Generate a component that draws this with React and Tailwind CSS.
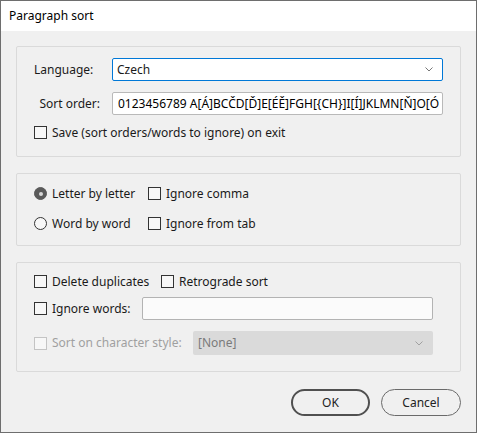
import React, { useState } from "react";

const font = { fontFamily: '"Noto Sans", "Open Sans", sans-serif' };

const Check = ({ checked, disabled, onChange }) => (
  <span
    onClick={disabled ? undefined : onChange}
    className={`inline-flex items-center justify-center w-[13px] h-[13px] shrink-0 border bg-[#f7f7f7] ${
      disabled ? "border-[#c4c4c4]" : "border-[#333333]"
    }`}
  >
    {checked && (
      <svg width="9" height="9" viewBox="0 0 9 9">
        <path d="M1 4.5 L3.5 7 L8 1.5" fill="none" stroke="#333" strokeWidth="1.4" />
      </svg>
    )}
  </span>
);

const Radio = ({ checked, onChange }) => (
  <span
    onClick={onChange}
    className={`inline-flex items-center justify-center w-[13px] h-[13px] shrink-0 rounded-full border ${
      checked ? "bg-[#5a5a5a] border-[#5a5a5a]" : "bg-[#f7f7f7] border-[#333333]"
    }`}
  >
    {checked && <span className="w-[4px] h-[4px] rounded-full bg-[#d8d8d8]" />}
  </span>
);

const Chevron = ({ color = "#777" }) => (
  <svg width="8" height="5" viewBox="0 0 8 5">
    <path d="M0.5 0.5 L4 4 L7.5 0.5" fill="none" stroke={color} strokeWidth="1" />
  </svg>
);

export default function App() {
  const [mode, setMode] = useState("letter");
  const [opts, setOpts] = useState({});
  const toggle = (k) => setOpts((o) => ({ ...o, [k]: !o[k] }));

  return (
    <div
      style={font}
      className="w-[477px] h-[433px] border border-[#6e6e6e] bg-[#f0f0f0] flex flex-col text-[12px] text-[#1a1a1a] overflow-hidden"
    >
      {/* title */}
      <div className="h-[30px] bg-white flex items-center pl-[8px] text-black">Paragraph sort</div>

      <div className="flex flex-col px-[15px] pt-[15px]">
        {/* language panel */}
        <div className="h-[111px] border border-[#dadada] rounded-[2px] pl-[17px] pt-[11px] flex flex-col">
          <div className="flex items-center h-[23px]">
            <div className="w-[78px]">Language:</div>
            <div className="w-[331px] h-[23px] border border-[#0078d7] rounded-[2px] bg-white flex items-center justify-between pl-[4px] pr-[9px]">
              <span>Czech</span>
              <Chevron />
            </div>
          </div>
          <div className="flex items-center h-[23px] mt-[11px]">
            <div className="w-[78px] text-right pr-[12px]">Sort order:</div>
            <div className="w-[331px] h-[23px] border border-[#b9b9b9] rounded-[2px] bg-white flex items-center pl-[5px] overflow-hidden whitespace-nowrap text-black">
              <span className="block w-[321px] overflow-hidden">
                0123456789 A[Á]BCČD[Ď]E[ÉĚ]FGH[{"{"}CH{"}"}]I[Í]JKLMN[Ň]O[Ó]P
              </span>
            </div>
          </div>
          <div className="flex items-center h-[13px] mt-[11px] gap-[5px]">
            <Check checked={opts.save} onChange={() => toggle("save")} />
            <span>Save (sort orders/words to ignore) on exit</span>
          </div>
        </div>

        {/* mode panel */}
        <div className="h-[73px] mt-[16px] border border-[#dadada] rounded-[2px] pl-[17px] pt-[13px] flex flex-col">
          <div className="flex items-center h-[13px]">
            <div className="w-[114px] flex items-center gap-[5px]">
              <Radio checked={mode === "letter"} onChange={() => setMode("letter")} />
              <span>Letter by letter</span>
            </div>
            <div className="flex items-center gap-[5px]">
              <Check checked={opts.comma} onChange={() => toggle("comma")} />
              <span>Ignore comma</span>
            </div>
          </div>
          <div className="flex items-center h-[13px] mt-[17px]">
            <div className="w-[114px] flex items-center gap-[5px]">
              <Radio checked={mode === "word"} onChange={() => setMode("word")} />
              <span>Word by word</span>
            </div>
            <div className="flex items-center gap-[5px]">
              <Check checked={opts.tab} onChange={() => toggle("tab")} />
              <span>Ignore from tab</span>
            </div>
          </div>
        </div>

        {/* options panel */}
        <div className="h-[110px] mt-[16px] border border-[#dadada] rounded-[2px] pl-[17px] pt-[12px] flex flex-col">
          <div className="flex items-center h-[13px]">
            <div className="w-[127px] flex items-center gap-[5px]">
              <Check checked={opts.dup} onChange={() => toggle("dup")} />
              <span>Delete duplicates</span>
            </div>
            <div className="flex items-center gap-[5px]">
              <Check checked={opts.retro} onChange={() => toggle("retro")} />
              <span>Retrograde sort</span>
            </div>
          </div>
          <div className="flex items-center h-[23px] mt-[9px]">
            <div className="w-[108px] flex items-center gap-[5px]">
              <Check checked={opts.ignore} onChange={() => toggle("ignore")} />
              <span>Ignore words:</span>
            </div>
            <div className="w-[291px] h-[23px] border border-[#b3b3b3] rounded-[2px] bg-[#fbfbfb]" />
          </div>
          <div className="flex items-center h-[24px] mt-[11px] text-[#a0a0a0]">
            <div className="w-[159px] flex items-center gap-[5px]">
              <Check disabled />
              <span>Sort on character style:</span>
            </div>
            <div className="w-[240px] h-[24px] rounded-[2px] bg-[#dadada] flex items-center justify-between pl-[5px] pr-[10px] text-[#7a7a7a]">
              <span>[None]</span>
              <Chevron color="#a0a0a0" />
            </div>
          </div>
        </div>

        {/* buttons */}
        <div className="flex justify-end gap-[11px] mt-[17px]">
          <button className="w-[79px] h-[27px] rounded-full border-2 border-[#505050] text-[#222]">OK</button>
          <button className="w-[80px] h-[27px] rounded-full border border-[#6a6a6a] text-[#222]">Cancel</button>
        </div>
      </div>
    </div>
  );
}
